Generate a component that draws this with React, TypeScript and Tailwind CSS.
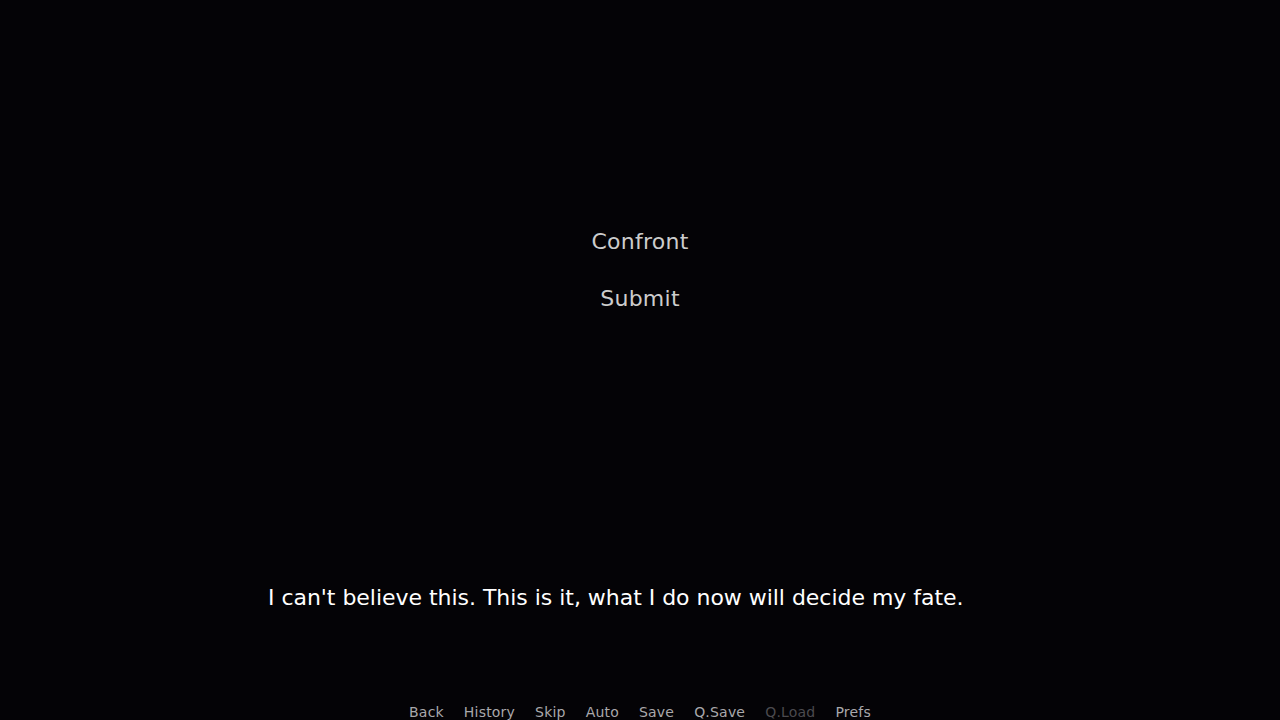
import React from 'react';

const quickItems = [
  { label: 'Back', disabled: false },
  { label: 'History', disabled: false },
  { label: 'Skip', disabled: false },
  { label: 'Auto', disabled: false },
  { label: 'Save', disabled: false },
  { label: 'Q.Save', disabled: false },
  { label: 'Q.Load', disabled: true },
  { label: 'Prefs', disabled: false },
];

const choices = ['Confront', 'Submit'];

export default function App() {
  return (
    <div
      className="w-[1280px] h-[720px] bg-[#040306] flex flex-col overflow-hidden"
      style={{ fontFamily: '"DejaVu Sans", sans-serif' }}
    >
      {/* choice menu */}
      <div className="flex flex-col items-center pt-[229px] gap-[31px]">
        {choices.map((c) => (
          <button
            key={c}
            className="text-[22px] leading-[26px] tracking-[0.25px] text-[#cccccc] hover:text-white cursor-pointer"
          >
            {c}
          </button>
        ))}
      </div>

      {/* dialogue */}
      <div className="mt-[273px] pl-[268px] pr-[266px]">
        <p className="text-[22px] leading-[26px] tracking-[-0.03px] text-white">
          I can't believe this. This is it, what I do now will decide my fate.
        </p>
      </div>

      {/* quick menu */}
      <div className="mt-auto flex justify-center">
        {quickItems.map((q) => (
          <button
            key={q.label}
            disabled={q.disabled}
            className={
              q.disabled
                ? 'px-[10px] text-[14px] leading-[16px] tracking-[0.2px] text-[#4b4a4e]'
                : 'px-[10px] text-[14px] leading-[16px] tracking-[0.2px] text-[#a9a8ab] hover:text-white cursor-pointer'
            }
          >
            {q.label}
          </button>
        ))}
      </div>
    </div>
  );
}
